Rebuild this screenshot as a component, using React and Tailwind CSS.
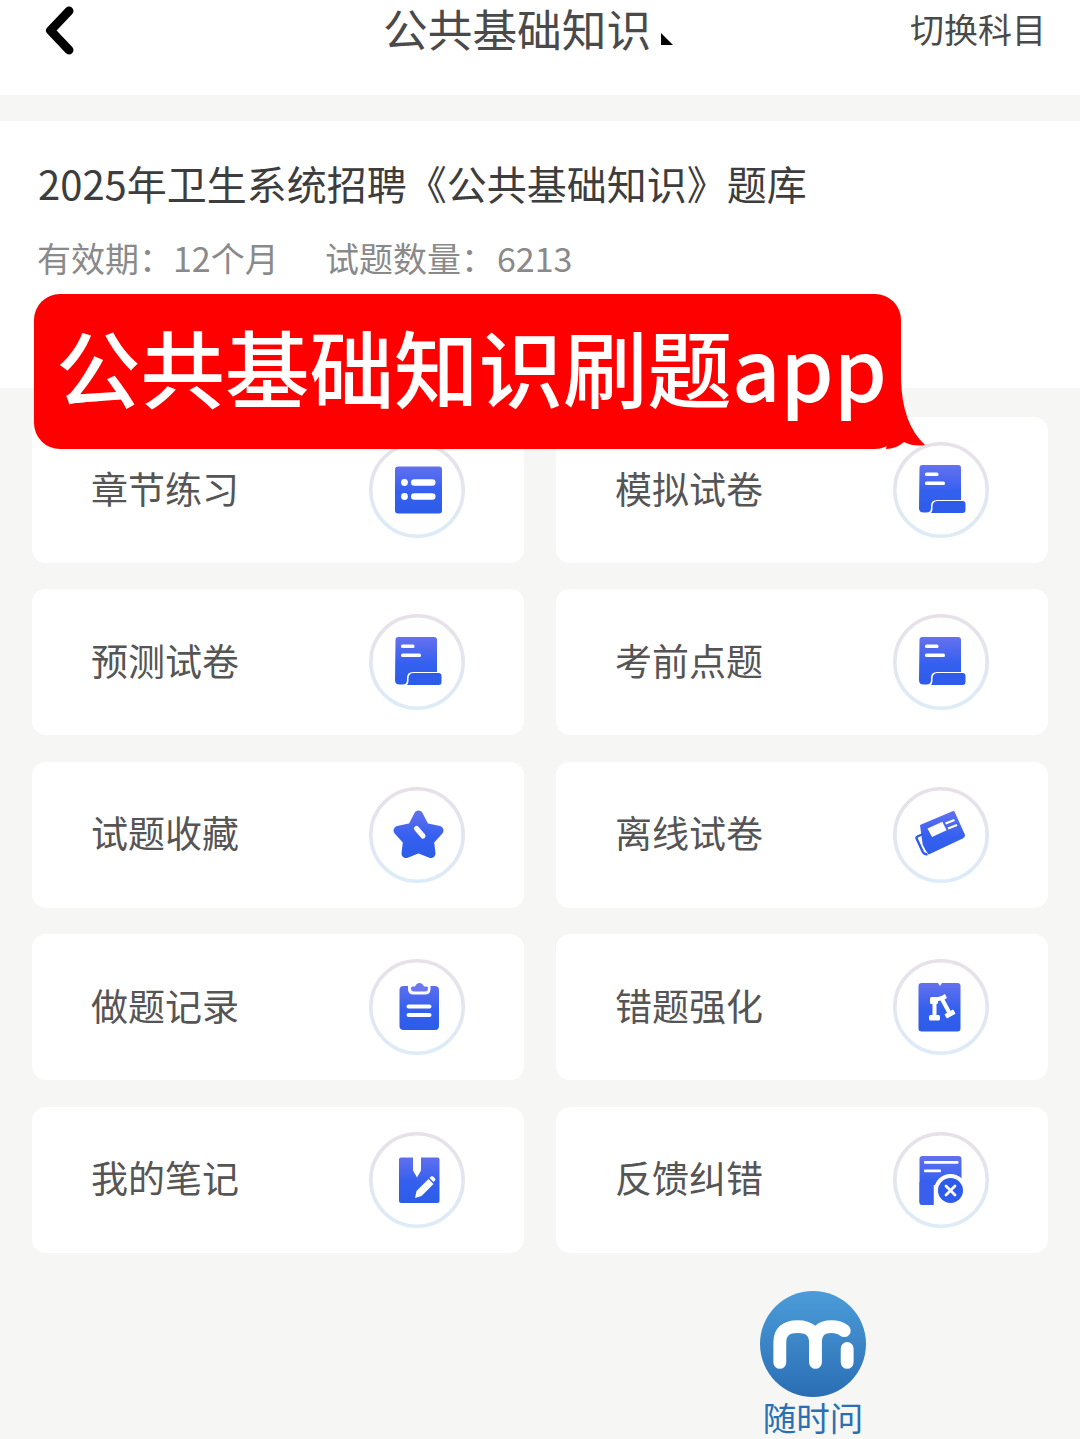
import React from 'react';

const FONT = "font-['Noto_Sans_CJK_SC','Noto_Sans',sans-serif]";

// Each glyph is drawn in the same 96x96 box as the ring round it
const Glyphs = {
  list: (
    <>
      <rect x="26" y="24.5" width="47" height="47" rx="3" fill="url(#iconFill)" />
      <circle cx="35.5" cy="40.5" r="3.4" fill="#fff" />
      <circle cx="35.5" cy="54.5" r="3.4" fill="#fff" />
      <rect x="42" y="37.2" width="24.5" height="6.6" rx="3.3" fill="#fff" />
      <rect x="42" y="51.2" width="24.5" height="6.6" rx="3.3" fill="#fff" />
    </>
  ),
  scroll: (
    <>
      <path d="M26.500 26a3 3 0 0 1 3-3h35.500a3 3 0 0 1 3 3v32h-24q-6 0-6 6v2q0 4.500-4.500 4.500h-3q-4.500 0-4.500-4.500z" fill="url(#iconFill)" />
      <rect x="32" y="30.500" width="13.500" height="3.400" rx="1.500" fill="#fff" />
      <rect x="32" y="39.500" width="20" height="3.400" rx="1.500" fill="#fff" />
      <path d="M39.500 64.500q0-5.500 5.500-5.500h24.500q3 0 3 3v6q0 3-3 3h-31.500q1.500-1.500 1.500-4z" fill="#2e5be9" />
    </>
  ),
  star: (
    <>
      <path d="M49.500 28L56 40.500 70 43.500 60.500 54 62 66.500 49.500 61.500 37 66.500 38.500 54 29 43.500 43 40.500z" fill="url(#iconFill)" stroke="url(#iconFill)" strokeWidth="9" strokeLinejoin="round" />
      <path d="M47.500 41.500l6.500 7.500" stroke="#fff" strokeWidth="5" strokeLinecap="round" />
    </>
  ),
  paper: (
    <>
      <path d="M27 38l32.500-13.800q1.500-.6 2.200.8l9 20q3 4-1 6.500l-34 16q-3.500-4-6-10z" fill="url(#iconFill)" />
      <path d="M30 47l-5.500 2.500q-1.500 .8-.8 2.300l6 13q1.500 3 4.800 2.200" fill="none" stroke="#2e5be9" strokeWidth="2.400" />
      <path d="M34.500 41.500l14.800-6.800 4.300 8.500-14.600 6.800z" fill="#fff" />
      <path d="M52.500 36.500l9-3.500M55 41.500l9-3.500" stroke="#fff" strokeWidth="2.400" />
    </>
  ),
  clipboard: (
    <>
      <path d="M30.500 31a4 4 0 0 1 4-4h4.500v3q0 5.500 5.500 5.500h11.500q5.500 0 5.500-5.500v-3h5a4 4 0 0 1 3.500 4v36a4 4 0 0 1-4 4h-32a4 4 0 0 1-3.500-4z" fill="url(#iconFill)" />
      <path d="M42 29q0-1.500 1.500-1.500h2.500q1.500-3.500 4.500-3.500t4.500 3.500h2.500q1.500 0 1.500 1.500v.5q0 3-3 3h-11q-3 0-3-3z" fill="#6a77f0" />
      <rect x="37.500" y="45.500" width="25" height="4" rx="2" fill="#fff" />
      <rect x="37.500" y="54" width="25" height="4" rx="2" fill="#fff" />
    </>
  ),
  ticket: (
    <>
      <path d="M29 24h16l2 3 2-3h15.500a3 3 0 0 1 3 3v42.500a3 3 0 0 1-3 3h-36a3 3 0 0 1-3-3v-42.500a3 3 0 0 1 3-3z" fill="url(#iconFill)" />
      <path d="M41.500 57v-16l7-2 8 15" fill="none" stroke="#fff" strokeWidth="4" />
      <rect x="37" y="38" width="8" height="7" rx="1.500" fill="#fff" />
      <rect x="36" y="56" width="11" height="5.500" rx="1.500" fill="#fff" />
      <path d="M52 55.500l8-4.500 2 3.500-8 4.500z" fill="#fff" stroke="#fff" strokeLinejoin="round" />
      <path d="M47 38l5-3 2 4-5 3z" fill="#fff" />
    </>
  ),
  note: (
    <>
      <path d="M32 25.500h12v13l4 7 4-7v-13h16.500a2 2 0 0 1 2 2v41.500a2 2 0 0 1-2 2h-36.500a2 2 0 0 1-2-2v-41.500a2 2 0 0 1 2-2z" fill="url(#iconFill)" />
      <path d="M47.500 59l12-12 5 5-12 12-6.500 2z" fill="#fff" />
      <path d="M60.500 46l1.500-1.500q1-1 2-0l2 2q1 1 0 2l-1.500 1.500z" fill="#fff" />
    </>
  ),
  report: (
    <>
      <path d="M26.500 27a3 3 0 0 1 3-3h36a3 3 0 0 1 3 3v26h-28v20h-11a3 3 0 0 1-3-3z" fill="url(#iconFill)" />
      <path d="M26.500 50h14v23h-11a3 3 0 0 1-3-3z" fill="#3a5fef" />
      <rect x="31" y="29" width="34.500" height="2.800" rx="1" fill="#fff" />
      <rect x="31" y="37.500" width="17" height="2.800" rx="1" fill="#fff" />
      <circle cx="57.500" cy="58.500" r="16.500" fill="#fff" />
      <circle cx="57.500" cy="58.500" r="12.500" fill="#2e5be9" />
      <path d="M53 54l9 9M62 54l-9 9" stroke="#fff" strokeWidth="2.800" strokeLinecap="round" />
    </>
  ),
};

const cards = [
  ['章节练习', 'list'],
  ['模拟试卷', 'scroll'],
  ['预测试卷', 'scroll'],
  ['考前点题', 'scroll'],
  ['试题收藏', 'star'],
  ['离线试卷', 'paper'],
  ['做题记录', 'clipboard'],
  ['错题强化', 'ticket'],
  ['我的笔记', 'note'],
  ['反馈纠错', 'report'],
];

const RingIcon = ({ name }) => (
  <svg width="96" height="96" viewBox="0 0 96 96" className="shrink-0">
    <circle cx="48" cy="48" r="46.200" fill="#fff" stroke="url(#ringStroke)" strokeWidth="3.600" />
    {Glyphs[name]}
  </svg>
);

const App = () => {
  return (
    <div className={`${FONT} relative h-[1439px] w-[1080px] overflow-hidden bg-[#f6f6f4]`}>
      {/* Shared gradients for the menu icons */}
      <svg width="0" height="0" className="absolute">
        <defs>
          <linearGradient id="iconFill" gradientUnits="userSpaceOnUse" x1="48" y1="22" x2="48" y2="72">
            <stop offset="0" stopColor="#6672ee" />
            <stop offset="0.55" stopColor="#3560ef" />
            <stop offset="1" stopColor="#2c5ce8" />
          </linearGradient>
          <linearGradient id="ringStroke" gradientUnits="userSpaceOnUse" x1="48" y1="0" x2="48" y2="96">
            <stop offset="0" stopColor="#e8e0e8" />
            <stop offset="1" stopColor="#dcecf8" />
          </linearGradient>
          <linearGradient id="logoFill" x1="0" y1="0" x2="0" y2="1">
            <stop offset="0" stopColor="#4c9cd9" />
            <stop offset="1" stopColor="#2a6eb4" />
          </linearGradient>
        </defs>
      </svg>

      {/* Top bar */}
      <div className="relative flex h-[95px] items-start justify-between bg-white pl-[42px] pr-[34px]">
        <svg width="36" height="50" viewBox="0 0 36 50" className="mt-[6px]">
          <path d="M27 5L8.500 24.500 27 44" fill="none" stroke="#000" strokeWidth="9" strokeLinecap="round" strokeLinejoin="round" />
        </svg>
        <div className="absolute left-[383px] top-[-3px] flex items-start">
          <span className="text-[44.700px] leading-[62px] text-[#4a4a4a]">公共基础知识</span>
          <span className="ml-[10px] mt-[36px] h-0 w-0 border-b-[12px] border-r-[12px] border-b-black border-r-transparent" />
        </div>
        <span className="mt-[5px] text-[34px] leading-[48px] text-[#4a4a4a]">切换科目</span>
      </div>

      {/* Paper summary */}
      <div className="mt-[26px] h-[267px] bg-white pl-[38px] pt-[35px]">
        <h1 className="text-[40px] font-normal leading-[54px] text-[#3d3d3d] whitespace-nowrap">
          2025年卫生系统招聘《公共基础知识》题库
        </h1>
        <div className="mt-[24px] flex text-[34px] leading-[48px] text-[#8a8a8a]">
          <span className="w-[288px] -ml-[1px]">有效期：12个月</span>
          <span>试题数量：</span>
          <span className="ml-[2px]">6213</span>
        </div>
      </div>

      {/* Red caption bubble */}
      <div className="absolute left-[34px] top-[294px] flex h-[155px] w-[867px] rounded-[26px] bg-[#ff0000] pl-[22px] pt-[26px]">
        <span className="text-[84.500px] font-medium leading-[90px] text-white whitespace-nowrap">公共基础知识刷题app</span>
        <svg width="40" height="70" viewBox="0 0 40 70" className="absolute left-[852px] top-[85px]">
          <path d="M15 0Q16 45 39 66 Q28 68 18 63 Q10 70 0 70z" fill="#ff0000" />
        </svg>
      </div>

      {/* Menu cards */}
      <div className="mt-[29px] grid grid-cols-2 gap-x-8 gap-y-[26.400px] px-8">
        {cards.map(([label, icon]) => (
          <div key={label} className="flex h-[146px] items-center justify-between rounded-[14px] bg-white pl-[59px] pr-[59px]">
            <span className="-mt-[4px] text-[37px] leading-none text-[#555555]">{label}</span>
            <RingIcon name={icon} />
          </div>
        ))}
      </div>

      {/* Watermark logo */}
      <div className="mt-[38px] flex justify-end pr-[214px]">
        <div className="flex w-[106px] flex-col items-center">
          <svg width="106" height="106" viewBox="0 0 107 107">
            <circle cx="53.500" cy="53.500" r="53.500" fill="url(#logoFill)" />
            <path d="M20 72V52Q20 36 38 36Q56 36 56 52V72M56 52Q56 36 72 36Q80 36 85 40M88 58V72" fill="none" stroke="#fff" strokeWidth="13" strokeLinecap="round" />
          </svg>
          <span className="text-[33.500px] leading-[40px] text-[#2a6fb5] whitespace-nowrap">随时问</span>
        </div>
      </div>
    </div>
  );
};

export default App;
